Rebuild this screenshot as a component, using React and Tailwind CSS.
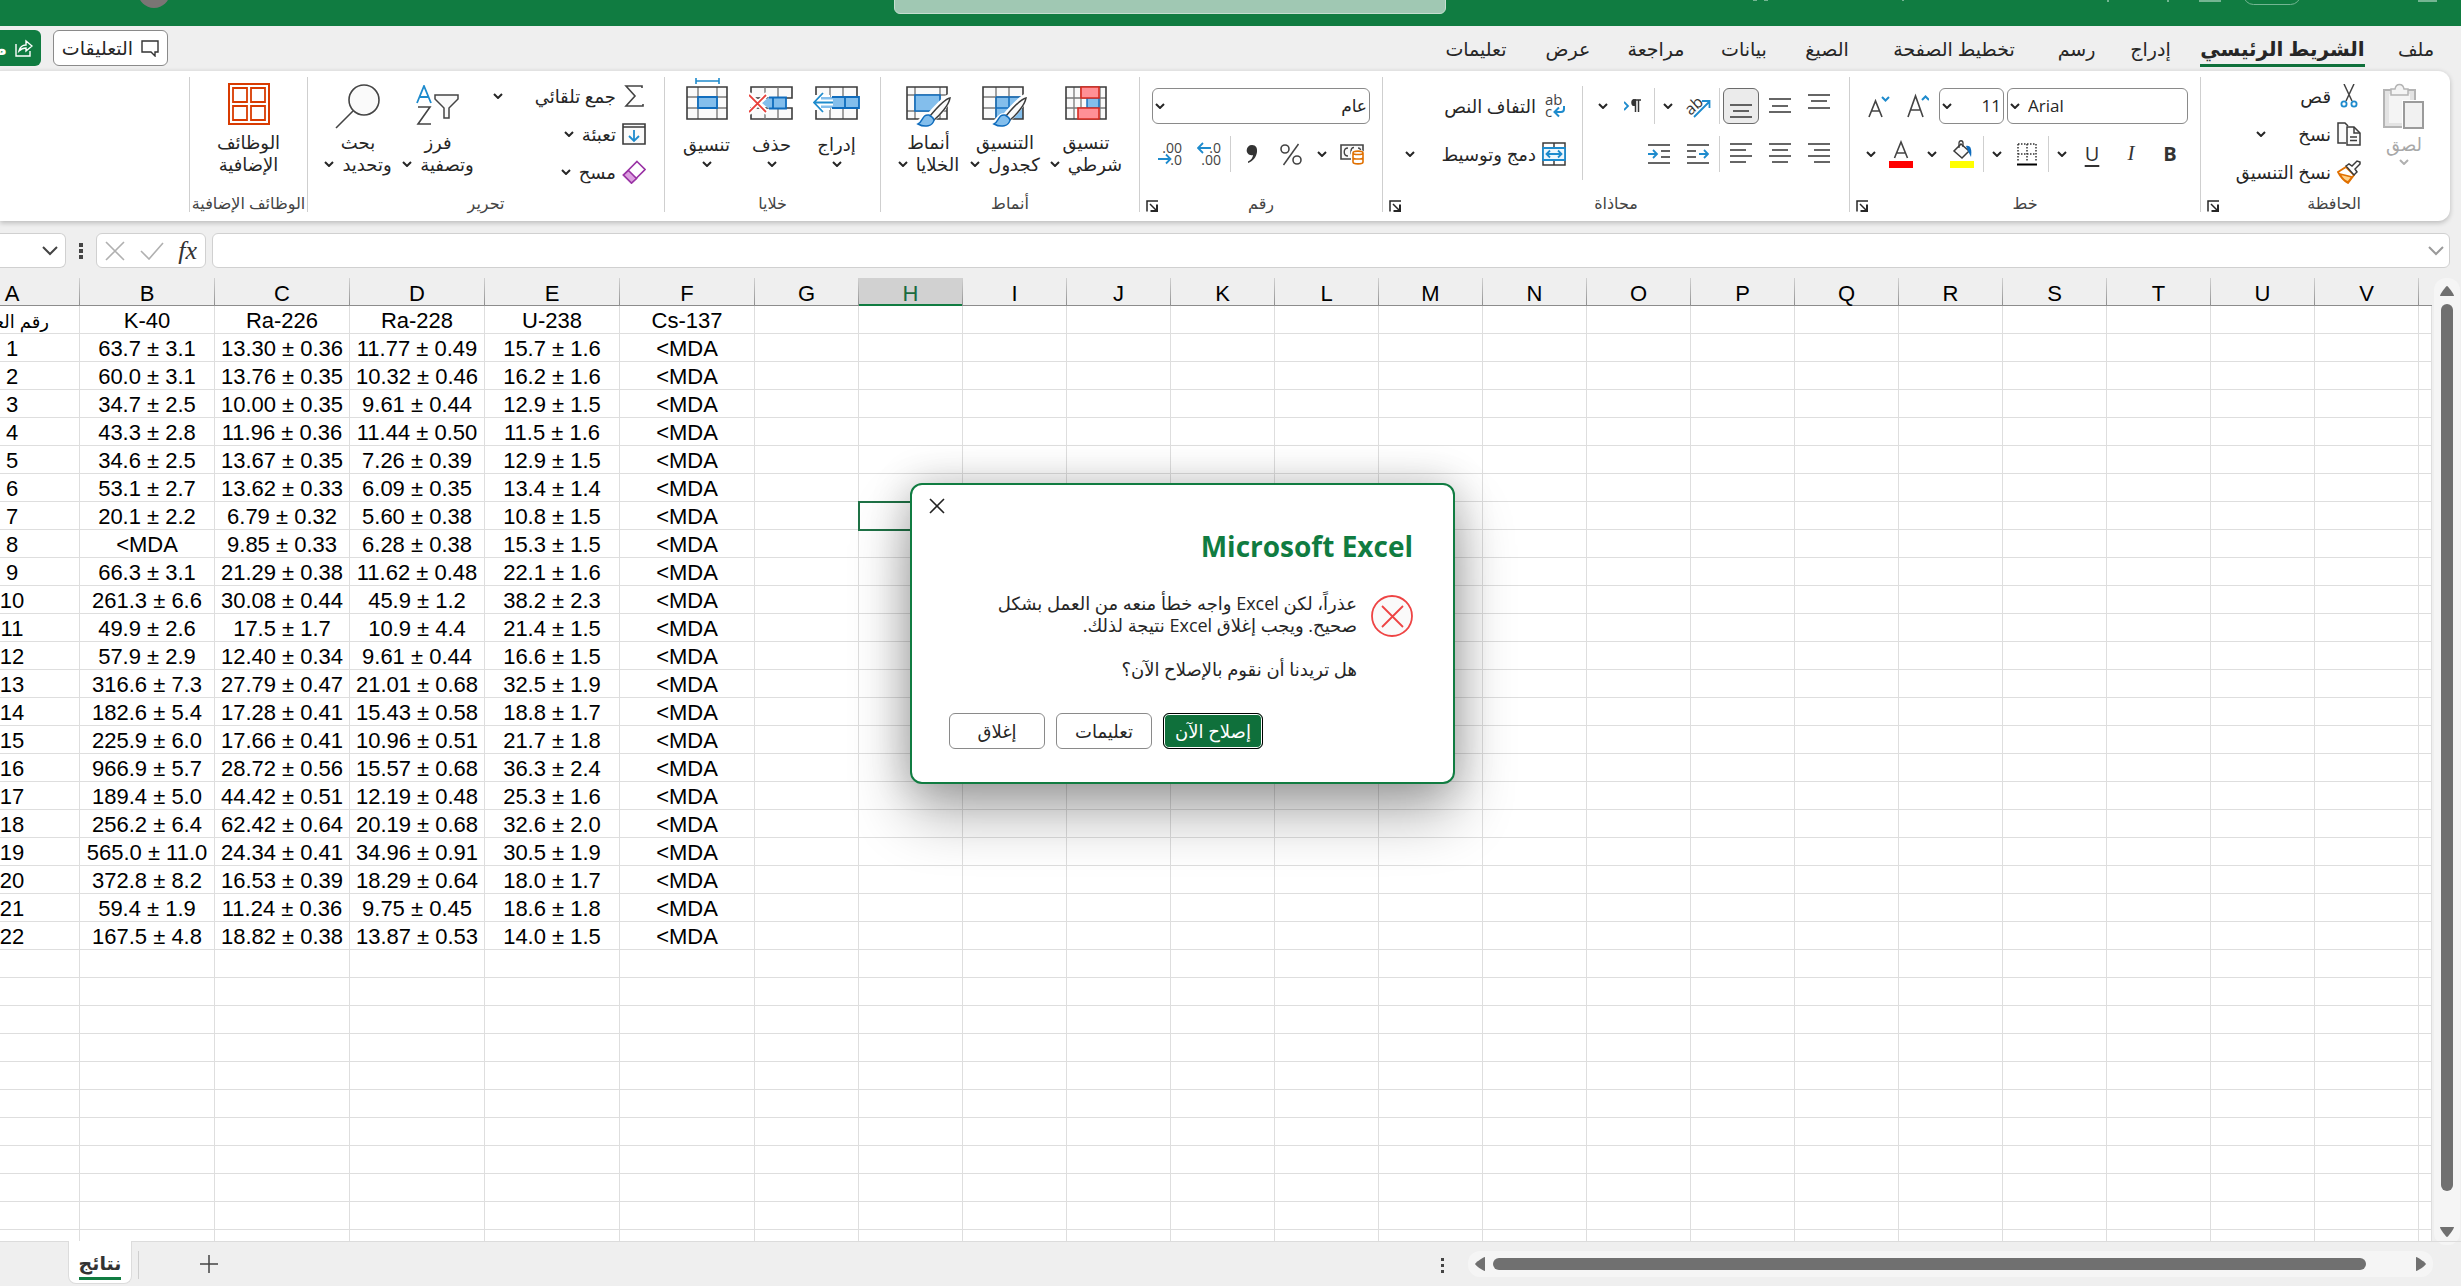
import React from "react";

const UI = "font-['Open_Sans','DejaVu_Sans',sans-serif]";

/* ---------- small glyphs ---------- */
const S = ({ w, h, children, className = "" }) => (
  <svg width={w} height={h} viewBox={`0 0 ${w} ${h}`} fill="none" direction="ltr" className={`shrink-0 ${className}`} aria-hidden="true">
    {children}
  </svg>
);

const Chev = ({ color = "#262626" }) => (
  <S w={10} h={6}>
    <path d="M1 1l4 4 4-4" stroke={color} strokeWidth="2" />
  </S>
);

const BigChev = ({ color = "#444", w = 2 }) => (
  <S w={16} h={10}>
    <path d="M1 1l7 7 7-7" stroke={color} strokeWidth={w} />
  </S>
);

const Launcher = () => (
  <button aria-label="خيارات" className="absolute bottom-0 left-[6px]">
    <S w={12} h={12}>
      <path d="M1 11.500V1h11" stroke="#262626" strokeWidth="1.500" />
      <path d="M4 4l6 6" stroke="#262626" strokeWidth="1.500" />
      <path d="M11 4.500V11H4.500" stroke="#262626" strokeWidth="2" />
    </S>
  </button>
);

const PasteIcon = () => (
  <S w={42} h={46}>
    <path d="M1 7h31v37H1z" fill="#e3e3e3" stroke="#b4b4b4" strokeWidth="2" />
    <path d="M6 11h21v29H6z" fill="#f4f4f4" />
    <path d="M8 12V6h4c1-6 8-6 9 0h4v6z" fill="#f4f4f4" stroke="#b4b4b4" strokeWidth="1.500" />
    <path d="M19 17h22v28H19z" fill="#fff" />
    <path d="M21 19h19v26H21z" fill="#f1f1f1" stroke="#9b9b9b" strokeWidth="2" />
  </S>
);

const CutIcon = () => (
  <S w={24} h={24}>
    <path d="M7 0l8 17M17 0L9 17" stroke="#444" strokeWidth="1.500" />
    <circle cx="7" cy="20" r="2.600" stroke="#1e8bcd" strokeWidth="1.800" />
    <circle cx="17" cy="20" r="2.600" stroke="#1e8bcd" strokeWidth="1.800" />
  </S>
);

const CopyIcon = () => (
  <S w={24} h={24}>
    <path d="M9 21H1V1h7l3 3" fill="#fafafa" stroke="#3b3b3b" strokeWidth="1.500" />
    <path d="M10 5h7l6 6v12H10z" fill="#fafafa" stroke="#3b3b3b" strokeWidth="1.500" />
    <path d="M17 5v6h6" stroke="#3b3b3b" strokeWidth="1.500" />
    <path d="M13 15h7M13 18.500h7" stroke="#3b3b3b" strokeWidth="1.300" />
  </S>
);

const BrushIcon = () => (
  <S w={24} h={24}>
    <path d="M1 12l8-5 8 8-6 8C6 20 3 16 1 12z" fill="#fff" stroke="#e07000" strokeWidth="1.800" />
    <path d="M3 14l12 3-4 5c-3-1-6-4-8-8z" fill="#ffd28a" stroke="#e07000" strokeWidth="1.500" />
    <path d="M9 6l3-2 3 2 5-5 3 1v2l-5 5 2 3-3 3z" fill="#fff" stroke="#3b3b3b" strokeWidth="1.500" />
  </S>
);

const Lines = ({ rows }) => (
  <S w={22} h={24}>
    {rows.map(([x, y, w], i) => (
      <path key={i} d={`M${x} ${y}h${w}`} stroke="#333" strokeWidth="1.500" />
    ))}
  </S>
);

const IndentIcon = ({ dir }) => (
  <S w={22} h={22}>
    <path d="M0 2h22M0 20h22" stroke="#333" strokeWidth="1.500" />
    {dir === "right" ? (
      <>
        <path d="M0 8h9M0 14h9" stroke="#333" strokeWidth="1.500" />
        <path d="M12 11h9M17 7l4 4-4 4" stroke="#1e8bcd" strokeWidth="1.800" />
      </>
    ) : (
      <>
        <path d="M13 8h9M13 14h9" stroke="#333" strokeWidth="1.500" />
        <path d="M0 11h9M5 7l4 4-4 4" stroke="#1e8bcd" strokeWidth="1.800" />
      </>
    )}
  </S>
);

const OrientIcon = () => (
  <S w={26} h={26}>
    <text x="0" y="19" fontSize="16" fill="#333" transform="rotate(-42 8 14)" fontFamily="Open Sans">ab</text>
    <path d="M9 24L24 9M17 8h7.500v7" stroke="#1e8bcd" strokeWidth="1.800" />
  </S>
);

const ParaIcon = () => (
  <S w={18} h={16}>
    <path d="M17 2h-8M11.500 2v12M14.500 2v12" stroke="#333" strokeWidth="1.500" />
    <path d="M12 1.300H9.500C6.500 1.300 6.500 8 9.500 8H12z" fill="#333" />
    <path d="M0 4l4 4-4 4" stroke="#1e8bcd" strokeWidth="1.800" />
  </S>
);

const WrapIcon = () => (
  <S w={22} h={26}>
    <text x="1" y="12" fontSize="15" fill="#444" fontFamily="Open Sans">ab</text>
    <text x="1" y="24" fontSize="15" fill="#444" fontFamily="Open Sans">c</text>
    <path d="M20 13v3c0 2-1 3-3 3H11M15 14.500L10.500 19l4.500 4.500" stroke="#1e8bcd" strokeWidth="2" />
  </S>
);

const MergeIcon = () => (
  <S w={24} h={24}>
    <path d="M1 1h22v22H1zM12 1v4M12 19v4" stroke="#3b3b3b" strokeWidth="1.500" />
    <path d="M1 6h22v12H1z" fill="#eef7fd" stroke="#1e8bcd" strokeWidth="1.800" />
    <path d="M5 12h14M8 8.500L4.500 12 8 15.500M16 8.500l3.500 3.500-3.500 3.500" stroke="#1e8bcd" strokeWidth="1.800" />
  </S>
);

const BordersIcon = () => (
  <S w={20} h={24}>
    <path d="M1 2h18M1 12h18M1 2v18M10 2v18M19 2v18" stroke="#333" strokeWidth="1.500" strokeDasharray="1.500 1.500" />
    <path d="M0 22.500h20" stroke="#000" strokeWidth="2" />
  </S>
);

const FillIcon = () => (
  <S w={24} h={28}>
    <path d="M11 4l8 7-7 7-8-7z" fill="#fafafa" stroke="#3b3b3b" strokeWidth="1.500" />
    <path d="M9 8V3c0-3 4-3 4 0v4" stroke="#3b3b3b" strokeWidth="1.300" />
    <path d="M16 6c5-1 6 4 5 11l-3-6z" fill="#0f6cbd" />
    <path d="M0 21h24v7H0z" fill="#ff0" />
  </S>
);

const FontColorIcon = () => (
  <S w={24} h={28}>
    <path d="M5.500 18L12 2l6.500 16M8 13h8" stroke="#444" strokeWidth="1.600" />
    <path d="M0 21h24v7H0z" fill="#f00" />
  </S>
);

const SizeIcon = ({ up }) =>
  up ? (
    <S w={22} h={26}>
      <path d="M1 24L8.500 3 16 24M3.500 17h10" stroke="#444" strokeWidth="1.600" />
      <path d="M15 7l3.500-3.500L22 7" stroke="#1e8bcd" strokeWidth="2" />
    </S>
  ) : (
    <S w={22} h={26}>
      <path d="M1 24L7.500 8 14 24M3.500 18h8" stroke="#444" strokeWidth="1.600" />
      <path d="M14 4l3.500 3.500L21 4" stroke="#1e8bcd" strokeWidth="2" />
    </S>
  );

const AccountIcon = () => (
  <S w={24} h={22}>
    <path d="M1 2h22v14H1z" fill="#fafafa" stroke="#444" strokeWidth="1.600" />
    <path d="M8 5c-5 0-5 8 0 8M14 4.500c-4 0-4 8 0 8M18 5c3 0 3 3 2 5" stroke="#444" strokeWidth="1.400" />
    <path d="M11 9c0-3 13-3 13 0v10c0 3-13 3-13 0z" fill="#fff" />
    <path d="M13 10c0-2.500 10-2.500 10 0v9c0 2.500-10 2.500-10 0zM13 10c0 2 10 2 10 0M13 14.500c0 2 10 2 10 0" stroke="#e07000" strokeWidth="1.600" />
  </S>
);

const PercentIcon = () => (
  <S w={24} h={24}>
    <circle cx="6" cy="7" r="4" stroke="#444" strokeWidth="1.600" />
    <circle cx="18" cy="18" r="4" stroke="#444" strokeWidth="1.600" />
    <path d="M19.500 2L4.500 23" stroke="#444" strokeWidth="1.500" />
  </S>
);

const CommaIcon = () => (
  <S w={12} h={20}>
    <path d="M6 1c4 0 5.500 3 5 7-.600 5-4 9-9 11v-1.500c3-1.500 5-4 5-6.500C3 12 .500 9 .700 6 1 3 3 1 6 1z" fill="#333" />
  </S>
);

const DecimalIcon = ({ more }) => (
  <S w={24} h={26}>
    <text x="24" y="12" fontSize="14" textAnchor="end" fill="#444" fontFamily="Open Sans">{more ? ".0" : ".00"}</text>
    <text x="24" y="24" fontSize="14" textAnchor="end" fill="#444" fontFamily="Open Sans">{more ? ".00" : ".0"}</text>
    {more ? (
      <path d="M1 7h13M6 2L1 7l5 5" stroke="#1e8bcd" strokeWidth="1.800" />
    ) : (
      <path d="M0 18h12M8 13.500l4.500 4.500L8 22.500" stroke="#1e8bcd" strokeWidth="1.800" />
    )}
  </S>
);

const Grid = ({ children }) => (
  <>
    <path d="M2 2h40v32H2z" fill="#fafafa" />
    {children}
    <path d="M2 2h40v32H2z" stroke="#3b3b3b" strokeWidth="1.600" />
  </>
);

const PaintBrush = () => (
  <>
    <path d="M46 10c-6 2-18 15-22 20-7-1-7 7-13 9 8 5 17 2 18-5 5-5 15-15 17-24z" fill="#fff" stroke="#fff" strokeWidth="4" />
    <path d="M45 13c-5 1-15 12-20 18l4 4c6-5 15-15 16-22z" fill="#fafafa" stroke="#3b3b3b" strokeWidth="1.500" />
    <path d="M24 30c-7-1-6 7-11 9 7 4 15 2 16-4-1-3-3-4-5-5z" fill="#83beec" stroke="#0f6cbd" strokeWidth="1.500" />
  </>
);

const CondFormatIcon = () => (
  <S w={44} h={44}>
    <Grid>
      <path d="M10 2v32M17 2v32M36 2v32M2 13h40M2 23h40" stroke="#7a7a7a" strokeWidth="1.300" />
      <path d="M23 13h12v10H23z" fill="#83beec" stroke="#0f6cbd" strokeWidth="1.400" />
    </Grid>
    <path d="M17 2h18v11H17zM14 23h21v11H14z" fill="#ff9096" stroke="#d92b20" strokeWidth="1.600" />
  </S>
);

const TableFormatIcon = () => (
  <S w={48} h={44}>
    <Grid>
      <path d="M15 12h27v22H15z" fill="#83beec" />
      <path d="M15 2v32M28 2v10M2 12h40M2 23h13" stroke="#7a7a7a" strokeWidth="1.400" />
      <path d="M15 12v22M28 12v22M15 12h27M15 23h27" stroke="#0f6cbd" strokeWidth="1.500" />
    </Grid>
    <PaintBrush />
  </S>
);

const CellStylesIcon = () => (
  <S w={48} h={44}>
    <Grid>
      <path d="M10 2v32M35 2v32M2 10h40M2 26h40" stroke="#7a7a7a" strokeWidth="1.400" />
      <path d="M10 10h25v16H10z" fill="#83beec" stroke="#0f6cbd" strokeWidth="1.600" />
    </Grid>
    <PaintBrush />
  </S>
);

const InsertIcon = () => (
  <S w={48} h={44}>
    <path d="M3 2h41v32H3z" fill="#fafafa" />
    <path d="M17 2v32M30 2v32" stroke="#7a7a7a" strokeWidth="1.400" />
    <path d="M3 2h41v32H3z" stroke="#3b3b3b" strokeWidth="1.600" />
    <path d="M0 10h17v15H0z" fill="#fff" />
    <path d="M8 12h38v11H8z" fill="#83beec" />
    <path d="M19 12h27v11H19M32 12v11" stroke="#0f6cbd" strokeWidth="1.800" />
    <path d="M2 17.500h18" stroke="#fff" strokeWidth="6" />
    <path d="M10 8L1 17.500 10 27M1 17.500h19" stroke="#1e8bcd" strokeWidth="1.800" />
  </S>
);

const DeleteIcon = () => (
  <S w={46} h={44}>
    <path d="M2 2h41v11H2zM2 23h41v11H2z" fill="#fafafa" stroke="#3b3b3b" strokeWidth="1.600" />
    <path d="M16 2v11M29 2v11M16 23v11M29 23v11" stroke="#7a7a7a" strokeWidth="1.400" />
    <path d="M13 18l7-6h17v12H20z" fill="#83beec" />
    <path d="M20 12.500h17v11H20M24 12.500v11" stroke="#0f6cbd" strokeWidth="1.800" />
    <path d="M0 9l18 19M18 9L0 28" stroke="#fff" strokeWidth="5" />
    <path d="M0 10l17 17M17 10L0 27" stroke="#e8403a" strokeWidth="1.800" />
  </S>
);

const FormatIcon = () => (
  <S w={44} h={50} className="-mt-2">
    <path d="M11 0v6M34 0v6M11 3h23" stroke="#1e8bcd" strokeWidth="1.600" />
    <g transform="translate(0 7)">
      <Grid>
        <path d="M13 2v32M32 2v32M2 12h40M2 23h40" stroke="#7a7a7a" strokeWidth="1.400" />
        <path d="M13 12h19v11H13z" fill="#83beec" stroke="#0f6cbd" strokeWidth="1.800" />
      </Grid>
    </g>
  </S>
);

const SumIcon = () => (
  <S w={24} h={24}>
    <path d="M20 4V2H4l9 10L4 22h17v-2" stroke="#444" strokeWidth="1.600" />
  </S>
);

const FillDownIcon = () => (
  <S w={24} h={24}>
    <path d="M1 2h22v20H1z" fill="#fafafa" stroke="#3b3b3b" strokeWidth="1.600" />
    <path d="M1 5h22" stroke="#3b3b3b" strokeWidth="1.400" />
    <path d="M12 8v11M7 14l5 5 5-5" stroke="#1e8bcd" strokeWidth="1.800" />
  </S>
);

const EraserIcon = () => (
  <S w={24} h={24}>
    <path d="M15 1.500l8 8L9.500 23l-8-8z" fill="#fff" stroke="#9a33a5" strokeWidth="1.600" />
    <path d="M6.500 10.500l8 8L9.500 23l-8-8z" fill="#dc9fe0" stroke="#9a33a5" strokeWidth="1.600" />
  </S>
);

const SortIcon = () => (
  <S w={44} h={44}>
    <path d="M1 18L8 1l7 17M3.500 12h9" stroke="#1e8bcd" strokeWidth="1.800" />
    <path d="M2 22h12L2 39h13" stroke="#444" strokeWidth="1.600" />
    <path d="M19 10h23v4l-9 9v10h-5V23l-9-9z" fill="#fafafa" stroke="#444" strokeWidth="1.500" />
  </S>
);

const FindIcon = () => (
  <S w={46} h={46}>
    <circle cx="29" cy="16" r="15" fill="#fafafa" stroke="#444" strokeWidth="1.600" />
    <path d="M18 27L1 44" stroke="#444" strokeWidth="1.600" />
  </S>
);

const AddinsIcon = () => (
  <S w={42} h={48}>
    <path d="M1 1h40v40H1z" stroke="#d83b01" strokeWidth="2" />
    <path d="M5 5h14v14H5zM23 5h14v14H23zM5 23h14v14H5zM23 23h14v14H23z" stroke="#d83b01" strokeWidth="1.800" />
  </S>
);

const CommentIcon = () => (
  <S w={18} h={17}>
    <path d="M1 1h16v11h-3v4l-4-4H1z" stroke="#333" strokeWidth="1.400" />
  </S>
);

const ShareIcon = () => (
  <S w={18} h={18}>
    <path d="M1 5v12h14v-5" stroke="#fff" strokeWidth="1.400" />
    <path d="M4 12c1-4 3-6 7-6V2l6 5-6 5V9c-3 0-5 1-7 3z" stroke="#fff" strokeWidth="1.400" />
  </S>
);

/* ---------- ribbon pieces ---------- */
const VSep = () => <div className="h-9 w-px shrink-0 bg-[#cfcfcf]" />;

const Btn = ({ label, children, active }) => (
  <button
    aria-label={label}
    className={
      active
        ? "flex h-9 w-9 shrink-0 items-center justify-center rounded-md border border-[#6b6b6b] bg-[#ebebeb]"
        : "flex h-9 w-9 shrink-0 items-center justify-center"
    }
  >
    {children}
  </button>
);

const Drop = ({ label = "المزيد" }) => (
  <button aria-label={label} className="flex h-9 w-[19px] shrink-0 items-center justify-center">
    <Chev />
  </button>
);

const Group = ({ title, width, launcher, children, center = "justify-center" }) => (
  <section aria-label={title} className={`relative flex shrink-0 flex-col border-l border-[#cfcfcf] ${width}`}>
    <div className="flex h-[117px] items-start">{children}</div>
    <div className={`flex h-[18px] items-center text-[16px] leading-[18px] whitespace-nowrap text-[#444] ${center}`}>{title}</div>
    {launcher && <Launcher />}
  </section>
);

const Tall = ({ icon, lines, width, below }) => (
  <button className={`flex shrink-0 flex-col items-center text-[18px] leading-[22px] whitespace-nowrap ${width}`}>
    <span className="flex h-12 items-center justify-center">{icon}</span>
    <span className={below && !lines[1] ? "mt-0.5" : ""}>{lines[0]}</span>
    {lines[1] && (
      <span className="flex items-center gap-2">
        {lines[1]}
        {!below && <Chev />}
      </span>
    )}
    {below && !lines[1] && <span className="flex h-[18px] items-center"><Chev /></span>}
  </button>
);

const Row = ({ icon, text, drop, gap = "gap-3" }) => (
  <button className={`flex h-[38px] items-center whitespace-nowrap text-[18px] ${gap}`}>
    <span className="flex items-center gap-[6px]">
      {icon}
      <span>{text}</span>
    </span>
    {drop && <Chev />}
  </button>
);

const Field = ({ label, width, value, dir, pad }) => (
  <div className={`relative h-9 shrink-0 ${width}`}>
    <select aria-label={label} dir={dir} className={`h-9 w-full appearance-none rounded-md border border-[#8a8a8a] bg-white text-[17px] leading-8 ${pad}`}>
      <option>{value}</option>
    </select>
    <span className="pointer-events-none absolute top-[15px] left-[3px]">
      <Chev />
    </span>
  </div>
);

const TABS = [
  ["ملف", "w-[70px]"],
  ["الشريط الرئيسي", "w-[197px]"],
  ["إدراج", "w-[67px]"],
  ["رسم", "w-[81px]"],
  ["تخطيط الصفحة", "w-[164px]"],
  ["الصيغ", "w-[90px]"],
  ["بيانات", "w-[76px]"],
  ["مراجعة", "w-[100px]"],
  ["عرض", "w-[76px]"],
  ["تعليمات", "w-[108px]"],
];

function TitleBar() {
  return (
    <header className="relative h-[26px] shrink-0 overflow-hidden bg-[#107c41]">
      <div className="absolute -top-6 left-[138px] h-8 w-8 rounded-full bg-[#7a7574]" />
      <div className="absolute -top-4 left-[894px] h-[30px] w-[552px] rounded-md border border-[#c5dfd0] bg-[#a0c8b3]" />
      <div className="absolute -top-4 right-[160px] h-[21px] w-[58px] rounded-full border border-[#74b592]" />
      <div className="absolute -top-4 right-[240px] h-[18px] w-[22px] border-2 border-[#74b592]" />
      <div className="absolute -top-4 right-[24px] h-[18px] w-[19px] border-2 border-[#74b592]" />
      <div className="absolute top-0 right-[292px] h-0.5 w-0.5 bg-[#74b592]" />
      <div className="absolute top-0 right-[352px] h-0.5 w-0.5 bg-[#74b592]" />
      <div className="absolute top-0 right-[557px] h-px w-0.5 bg-[#74b592]" />
      <div className="absolute top-0 right-[693px] h-px w-1 bg-[#74b592]" />
      <div className="absolute top-0 right-[704px] h-px w-1 bg-[#74b592]" />
    </header>
  );
}

function TabRow() {
  return (
    <nav dir="rtl" className="flex h-[44px] shrink-0 items-center justify-between pr-[10px] text-[19px]">
      <div className="flex h-full">
        {TABS.map(([t, w], i) => (
          <button key={t} className={`flex shrink-0 flex-col items-center pt-[9px] whitespace-nowrap ${w}`}>
            {i === 1 ? (
              <span className="border-b-3 border-[#0f703b] pb-px text-[20px] leading-[28px] font-bold">{t}</span>
            ) : (
              <span className="leading-[28px]">{t}</span>
            )}
          </button>
        ))}
      </div>
      <div className="flex items-center gap-3 text-[19px]">
        <button className="flex h-9 w-[115px] items-center justify-center gap-2 rounded-md border border-[#8a8a8a] bg-white">
          <CommentIcon />
          التعليقات
        </button>
        <div className="flex w-[41px] justify-start overflow-hidden">
          <button className="flex h-9 shrink-0 items-center gap-2 rounded-r-md bg-[#107c41] px-2 font-semibold text-white">
            <ShareIcon />
            مشاركة
          </button>
        </div>
      </div>
    </nav>
  );
}

function Ribbon() {
  return (
    <div dir="rtl" className="mr-[11px] flex h-[151px] shrink-0 overflow-hidden rounded-r-xl border-t border-[#e2e2e2] bg-white pt-[6px] pb-[9px] shadow-[0_2px_5px_rgba(0,0,0,0.22)]">
      <Group title="الحافظة" width="w-[250px]" launcher center="justify-start pr-[89px]">
        <button className="mt-[6px] mr-[25px] flex w-[42px] flex-col items-center text-[18px] leading-[22px] text-[#a8a8a8]">
          <PasteIcon />
          <span className="mt-1">لصق</span>
          <span className="mt-1"><Chev color="#b0b0b0" /></span>
        </button>
        <div className="mr-[22px] flex flex-col">
          <Row icon={<CutIcon />} text="قص" />
          <Row icon={<CopyIcon />} text="نسخ" drop gap="gap-8" />
          <Row icon={<BrushIcon />} text="نسخ التنسيق" />
        </div>
      </Group>

      <Group title="خط" width="w-[351px]" launcher>
        <div className="mt-[11px] flex flex-col gap-3 pr-3">
          <div className="flex gap-[3px]">
            <Field label="الخط" width="w-[181px]" value="Arial" dir="ltr" pad="pl-5" />
            <Field label="حجم الخط" width="w-[65px]" value="11" dir="rtl" pad="pr-0.5" />
            <Btn label="تكبير الخط"><SizeIcon up /></Btn>
            <Btn label="تصغير الخط"><SizeIcon /></Btn>
          </div>
          <div className="flex gap-[3px]">
            <Btn label="غامق"><span className="text-[20px] font-bold text-[#333]">B</span></Btn>
            <Btn label="مائل"><span className="font-['Liberation_Serif',serif] text-[21px] text-[#333] italic">I</span></Btn>
            <Btn label="تسطير"><span className="text-[20px] text-[#333] underline underline-offset-4">U</span></Btn>
            <Drop />
            <VSep />
            <Btn label="حدود"><BordersIcon /></Btn>
            <Drop />
            <VSep />
            <Btn label="لون التعبئة"><FillIcon /></Btn>
            <Drop />
            <Btn label="لون الخط"><FontColorIcon /></Btn>
            <Drop />
          </div>
        </div>
      </Group>

      <Group title="محاذاة" width="w-[467px]" launcher>
        <div className="mt-[11px] flex w-[256px] flex-col gap-3 pr-3">
          <div className="flex gap-[3px]">
            <Btn label="أعلى"><Lines rows={[[0, 1, 22], [3, 7, 16], [0, 14, 22]]} /></Btn>
            <Btn label="وسط"><Lines rows={[[0, 5, 22], [3, 12, 16], [0, 18, 22]]} /></Btn>
            <Btn label="أسفل" active><Lines rows={[[0, 11, 22], [3, 17, 16], [0, 23, 22]]} /></Btn>
            <VSep />
            <Btn label="اتجاه النص"><OrientIcon /></Btn>
            <Drop />
            <VSep />
            <Btn label="من اليمين إلى اليسار"><ParaIcon /></Btn>
            <Drop />
          </div>
          <div className="flex gap-[3px]">
            <Btn label="محاذاة لليمين"><Lines rows={[[0, 2, 22], [6, 8, 16], [0, 14, 22], [6, 20, 16]]} /></Btn>
            <Btn label="توسيط"><Lines rows={[[0, 2, 22], [3, 8, 16], [0, 14, 22], [3, 20, 16]]} /></Btn>
            <Btn label="محاذاة لليسار"><Lines rows={[[0, 2, 22], [0, 8, 16], [0, 14, 22], [0, 20, 16]]} /></Btn>
            <VSep />
            <Btn label="زيادة المسافة"><IndentIcon dir="right" /></Btn>
            <Btn label="إنقاص المسافة"><IndentIcon dir="left" /></Btn>
          </div>
        </div>
        <div className="mt-[9px] mr-[10px] h-[94px] w-px bg-[#cfcfcf]" />
        <div className="mt-[11px] mr-4 flex flex-col gap-3 text-[18px]">
          <button className="flex h-9 items-center gap-2 whitespace-nowrap"><WrapIcon />التفاف النص</button>
          <button className="flex h-9 items-center gap-[6px] whitespace-nowrap"><MergeIcon />دمج وتوسيط<span className="mr-5"><Chev /></span></button>
        </div>
      </Group>

      <Group title="رقم" width="w-[243px]" launcher>
        <div className="mt-[11px] flex flex-col gap-3 pr-3">
          <Field label="تنسيق الأرقام" width="w-[218px]" value="عام" dir="rtl" pad="pr-0.5" />
          <div className="flex gap-[3px]">
            <Btn label="تنسيق محاسبة"><AccountIcon /></Btn>
            <Drop />
            <Btn label="نسبة مئوية"><PercentIcon /></Btn>
            <Btn label="فاصلة"><CommaIcon /></Btn>
            <VSep />
            <Btn label="زيادة المنازل"><DecimalIcon more /></Btn>
            <Btn label="إنقاص المنازل"><DecimalIcon /></Btn>
          </div>
        </div>
      </Group>

      <Group title="أنماط" width="w-[259px]">
        <div className="mt-[6px] flex pr-[13px]">
          <Tall width="w-[80px]" icon={<CondFormatIcon />} lines={["تنسيق", "شرطي"]} />
          <Tall width="w-[82px]" icon={<TableFormatIcon />} lines={["التنسيق", "كجدول"]} />
          <Tall width="w-[71px]" icon={<CellStylesIcon />} lines={["أنماط", "الخلايا"]} />
        </div>
      </Group>

      <Group title="خلايا" width="w-[216px]">
        <div className="mt-[6px] flex pr-[11px]">
          <Tall width="w-[65px]" icon={<InsertIcon />} lines={["إدراج"]} below />
          <Tall width="w-[65px]" icon={<DeleteIcon />} lines={["حذف"]} below />
          <Tall width="w-[65px]" icon={<FormatIcon />} lines={["تنسيق"]} below />
        </div>
      </Group>

      <Group title="تحرير" width="w-[357px]">
        <div className="flex w-[168px] flex-col items-start pr-[18px]">
          <Row icon={<SumIcon />} text="جمع تلقائي" drop gap="gap-8" />
          <Row icon={<FillDownIcon />} text="تعبئة" drop gap="gap-2" />
          <Row icon={<EraserIcon />} text="مسح" drop gap="gap-2" />
        </div>
        <div className="mt-[6px] flex pr-[18px]">
          <Tall width="w-[80px]" icon={<SortIcon />} lines={["فرز", "وتصفية"]} />
          <Tall width="w-[80px]" icon={<FindIcon />} lines={["بحث", "وتحديد"]} />
        </div>
      </Group>

      <Group title="الوظائف الإضافية" width="w-[118px]">
        <div className="mt-[6px] flex w-full justify-center">
          <Tall width="w-[80px]" icon={<AddinsIcon />} lines={["الوظائف", "الإضافية"]} below />
        </div>
      </Group>
    </div>
  );
}

function FormulaBar() {
  return (
    <div className="mt-[12px] mr-[11px] flex h-[35px] shrink-0 items-stretch">
      <button aria-label="مربع الاسم" className="flex w-[66px] items-center justify-end rounded-r-md border border-l-0 border-[#d0d0d0] bg-white pr-[7px]">
        <BigChev />
      </button>
      <div className="flex w-[30px] items-center justify-center">
        <S w={4} h={16}>
          <path d="M0 0h4v4H0zM0 6h4v4H0zM0 12h4v4H0z" fill="#444" />
        </S>
      </div>
      <div className="flex w-[110px] items-center justify-between rounded-md border border-[#d0d0d0] bg-white px-[8px]">
        <button aria-label="إلغاء">
          <S w={20} h={20}><path d="M1 1l18 18M19 1L1 19" stroke="#b0b0b0" strokeWidth="1.600" /></S>
        </button>
        <button aria-label="إدخال">
          <S w={24} h={18}><path d="M1 9l8 8L23 1" stroke="#b0b0b0" strokeWidth="1.600" /></S>
        </button>
        <button aria-label="إدراج دالة" className="font-['Liberation_Serif',serif] text-[26px] leading-none text-[#333] italic">fx</button>
      </div>
      <div className="ml-[6px] flex flex-1 items-center rounded-md border border-[#d0d0d0] bg-white pr-[5px]">
        <input aria-label="شريط الصيغة" className="h-full flex-1 bg-transparent px-2 text-[18px] outline-none" />
        <button aria-label="توسيع"><BigChev color="#9a9a9a" /></button>
      </div>
    </div>
  );
}

/* ---------- sheet ---------- */
const COLS = "ABCDEFGHIJKLMNOPQRSTUV".split("");
const DATA = [
  ["رقم العينة", "K-40", "Ra-226", "Ra-228", "U-238", "Cs-137"],
  ["1", "63.7 ± 3.1", "13.30 ± 0.36", "11.77 ± 0.49", "15.7 ± 1.6", "<MDA"],
  ["2", "60.0 ± 3.1", "13.76 ± 0.35", "10.32 ± 0.46", "16.2 ± 1.6", "<MDA"],
  ["3", "34.7 ± 2.5", "10.00 ± 0.35", "9.61 ± 0.44", "12.9 ± 1.5", "<MDA"],
  ["4", "43.3 ± 2.8", "11.96 ± 0.36", "11.44 ± 0.50", "11.5 ± 1.6", "<MDA"],
  ["5", "34.6 ± 2.5", "13.67 ± 0.35", "7.26 ± 0.39", "12.9 ± 1.5", "<MDA"],
  ["6", "53.1 ± 2.7", "13.62 ± 0.33", "6.09 ± 0.35", "13.4 ± 1.4", "<MDA"],
  ["7", "20.1 ± 2.2", "6.79 ± 0.32", "5.60 ± 0.38", "10.8 ± 1.5", "<MDA"],
  ["8", "<MDA", "9.85 ± 0.33", "6.28 ± 0.38", "15.3 ± 1.5", "<MDA"],
  ["9", "66.3 ± 3.1", "21.29 ± 0.38", "11.62 ± 0.48", "22.1 ± 1.6", "<MDA"],
  ["10", "261.3 ± 6.6", "30.08 ± 0.44", "45.9 ± 1.2", "38.2 ± 2.3", "<MDA"],
  ["11", "49.9 ± 2.6", "17.5 ± 1.7", "10.9 ± 4.4", "21.4 ± 1.5", "<MDA"],
  ["12", "57.9 ± 2.9", "12.40 ± 0.34", "9.61 ± 0.44", "16.6 ± 1.5", "<MDA"],
  ["13", "316.6 ± 7.3", "27.79 ± 0.47", "21.01 ± 0.68", "32.5 ± 1.9", "<MDA"],
  ["14", "182.6 ± 5.4", "17.28 ± 0.41", "15.43 ± 0.58", "18.8 ± 1.7", "<MDA"],
  ["15", "225.9 ± 6.0", "17.66 ± 0.41", "10.96 ± 0.51", "21.7 ± 1.8", "<MDA"],
  ["16", "966.9 ± 5.7", "28.72 ± 0.56", "15.57 ± 0.68", "36.3 ± 2.4", "<MDA"],
  ["17", "189.4 ± 5.0", "44.42 ± 0.51", "12.19 ± 0.48", "25.3 ± 1.6", "<MDA"],
  ["18", "256.2 ± 6.4", "62.42 ± 0.64", "20.19 ± 0.68", "32.6 ± 2.0", "<MDA"],
  ["19", "565.0 ± 11.0", "24.34 ± 0.41", "34.96 ± 0.91", "30.5 ± 1.9", "<MDA"],
  ["20", "372.8 ± 8.2", "16.53 ± 0.39", "18.29 ± 0.64", "18.0 ± 1.7", "<MDA"],
  ["21", "59.4 ± 1.9", "11.24 ± 0.36", "9.75 ± 0.45", "18.6 ± 1.8", "<MDA"],
  ["22", "167.5 ± 4.8", "18.82 ± 0.38", "13.87 ± 0.53", "14.0 ± 1.5", "<MDA"],
];
const ROWS = Array.from({ length: 34 }, (_, i) => DATA[i] || []);
const HEAD = "h-7 border-r p-0 pt-[3px] font-normal leading-none [border-image:linear-gradient(to_bottom,#d4d4d4,#8c8c8c)_1]";
const CELL = "h-7 border-r border-b border-[#dedede] p-0 pt-[3px] leading-none whitespace-nowrap";

function Sheet() {
  return (
    <div className="flex min-w-0 flex-1 justify-end overflow-hidden">
      <table className="w-[2487px] shrink-0 table-fixed border-separate border-spacing-0 self-start text-center font-['Liberation_Sans','DejaVu_Sans',sans-serif] text-[22px] text-black">
        <colgroup>
          {COLS.map((c, i) => (
            <col key={c} className={i < 6 ? "w-[135px]" : "w-[104px]"} />
          ))}
          <col className="w-[13px]" />
        </colgroup>
        <thead>
          <tr>
            {COLS.map((c) => (
              <th
                key={c}
                scope="col"
                className={`${HEAD} ${c === "H" ? "bg-[#d1d1d1] text-[#1a6b40] shadow-[inset_0_-2px_0_#107c41]" : "shadow-[inset_0_-1px_0_#8c8c8c]"}`}
              >
                {c}
              </th>
            ))}
            <th className="h-7 p-0 shadow-[inset_0_-1px_0_#8c8c8c]" />
          </tr>
        </thead>
        <tbody className="bg-white">
          {ROWS.map((r, y) => (
            <tr key={y}>
              {[...COLS, ""].map((c, x) => (
                <td key={x} className={c === "H" && y === 7 ? `${CELL} outline-2 -outline-offset-1 outline-[#1f7246]` : CELL}>
                  {x === 0 && y === 0 ? <span className="text-[18px] leading-none">{r[x]}</span> : r[x]}
                </td>
              ))}
            </tr>
          ))}
        </tbody>
      </table>
    </div>
  );
}

function VScroll() {
  return (
    <div className="flex w-[29px] shrink-0 justify-center pl-px">
      <div className="-mb-1 flex w-[26px] flex-col items-center rounded-xl bg-[#f5f5f5] pt-2 pb-2">
        <S w={14} h={10}><path d="M7 0c1 0 7 8 7 10H0C0 8 6 0 7 0z" fill="#707070" /></S>
        <div className="mt-2 w-3 flex-1 rounded-full bg-[#707070]" />
        <S w={14} h={10} className="mt-9"><path d="M7 10c1 0 7-8 7-10H0c0 2 6 10 7 10z" fill="#707070" /></S>
      </div>
    </div>
  );
}

function BottomBar() {
  return (
    <footer className="flex h-[45px] shrink-0">
      <div className="flex min-w-0 flex-1 border-t border-[#dcdcdc]">
        <div className="-mt-px ml-[68px] flex h-[43px] w-[64px] justify-center rounded-b-lg border-x border-b border-[#dcdcdc] bg-white">
          <button className="mt-[7px] h-[32px] border-b-3 border-[#107c41] text-[19px] leading-[26px] font-semibold text-[#333]">نتائج</button>
        </div>
        <div className="mt-[9px] ml-[6px] h-7 w-px bg-[#cfcfcf]" />
        <button aria-label="ورقة جديدة" className="ml-[61px] self-center">
          <S w={18} h={18}><path d="M9 0v18M0 9h18" stroke="#444" strokeWidth="1.500" /></S>
        </button>
      </div>
      <div className="flex w-[1020px] shrink-0 items-center border-t border-[#dcdcdc]">
        <S w={4} h={16} className="mt-1"><path d="M0 0h3v3H0zM0 6h3v3H0zM0 12h3v3H0z" fill="#444" /></S>
        <div className="ml-[23px] flex h-[26px] flex-1 items-center rounded-xl bg-[#f5f5f5] pr-[7px] pl-[7px]">
          <S w={10} h={14}><path d="M0 7c0-1 8-7 10-7v14c-2 0-10-6-10-7z" fill="#707070" /></S>
          <div className="ml-[8px] h-3 flex-1 rounded-full bg-[#707070]" />
          <S w={10} h={14} className="ml-[50px]"><path d="M10 7c0-1-8-7-10-7v14c2 0 10-6 10-7z" fill="#707070" /></S>
        </div>
        <div className="w-7" />
      </div>
    </footer>
  );
}

/* ---------- error dialog ---------- */
function ErrorDialog() {
  return (
    <div
      role="dialog"
      dir="rtl"
      aria-label="Microsoft Excel"
      className="absolute top-[483px] left-[910px] flex w-[545px] flex-col rounded-xl border-2 border-[#107c41] bg-white pt-[13px] pr-[40px] pb-[33px] pl-[37px] shadow-[0_30px_60px_rgba(0,0,0,0.32),0_0_40px_rgba(0,0,0,0.2)]"
    >
      <button aria-label="إغلاق النافذة" className="-ml-[20px] self-end">
        <S w={16} h={16}><path d="M1 1l14 14M15 1L1 15" stroke="#222" strokeWidth="1.600" /></S>
      </button>
      <h1 dir="ltr" className="mt-[14px] text-right text-[28px] leading-[36px] font-bold text-[#107c41]">Microsoft Excel</h1>
      <div className="mt-[28px] flex gap-[14px]">
        <S w={42} h={42} className="mt-[3px]">
          <circle cx="21" cy="21" r="20" fill="#fafafa" stroke="#ee4444" strokeWidth="1.800" />
          <path d="M11 11l21 21M32 11L11 32" stroke="#ee4444" strokeWidth="1.800" />
        </S>
        <p className="text-[18px] leading-[22px] whitespace-nowrap">
          عذراً، لكن Excel واجه خطأ منعه من العمل بشكل
          <br />
          صحيح. ويجب إغلاق Excel نتيجة لذلك.
          <br />
          <br />
          هل تريدنا أن نقوم بالإصلاح الآن؟
        </p>
      </div>
      <div className="mt-[33px] flex justify-end gap-[11px] text-[18px]">
        <button className="h-9 w-[100px] rounded-md border border-black bg-[#0f703b] whitespace-nowrap text-white shadow-[inset_0_0_0_1px_#fff]">إصلاح الآن</button>
        <button className="h-9 w-[96px] rounded-md border border-[#8a8a8a] bg-white">تعليمات</button>
        <button className="h-9 w-[96px] rounded-md border border-[#8a8a8a] bg-white">إغلاق</button>
      </div>
    </div>
  );
}

export default function App() {
  return (
    <div className={`relative flex h-screen flex-col overflow-hidden bg-[#efefef] text-[#262626] ${UI}`}>
      <TitleBar />
      <TabRow />
      <Ribbon />
      <FormulaBar />
      <main className="mt-[10px] flex min-h-0 flex-1">
        <Sheet />
        <VScroll />
      </main>
      <BottomBar />
      <ErrorDialog />
    </div>
  );
}
